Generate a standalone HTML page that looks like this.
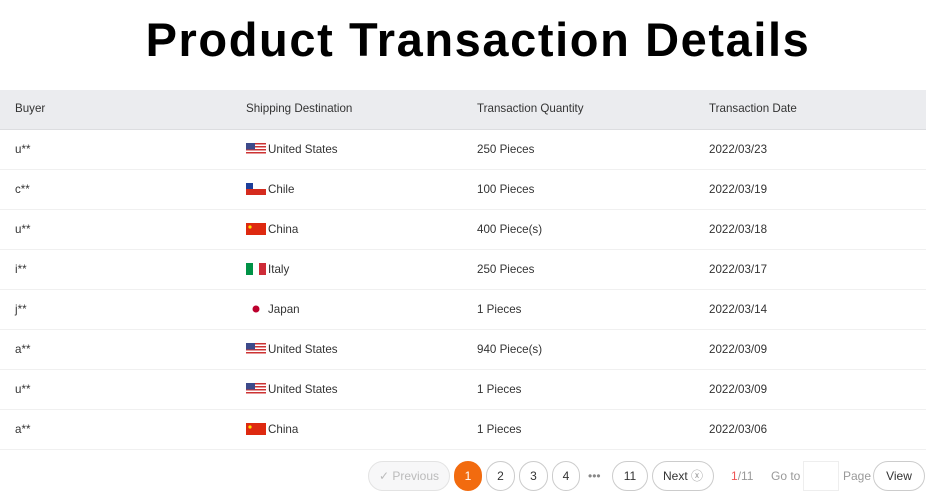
<!DOCTYPE html>
<html><head><style>
*{margin:0;padding:0;box-sizing:border-box}
body{width:926px;height:491px;background:#fff;font-family:"Liberation Sans",sans-serif;color:#333;position:relative;overflow:hidden}
h1{position:absolute;top:12px;left:0;width:956px;text-align:center;font-size:47px;font-weight:bold;color:#000;letter-spacing:1.6px}
.hd{position:absolute;top:90px;left:0;width:926px;height:40px;background:#ebecef;border-bottom:1px solid #dcdde0}
.row{position:absolute;left:0;width:926px;height:40px;border-bottom:1px solid #f0f0f0}
.c{position:absolute;font-size:11.6px;line-height:40px;top:0;color:#333}
.hd .c{line-height:38px}
.f{display:inline-block;width:20px;height:12px;vertical-align:-2px;margin-right:2px}
.btn{position:absolute;top:461px;height:30px;border:1px solid #ccc;border-radius:15px;font-size:12px;line-height:28px;text-align:center;color:#333;background:#fff}
.t{position:absolute;top:461px;line-height:30px;font-size:12px;color:#999}
</style></head><body>
<h1>Product Transaction Details</h1>
<div class="hd"><span class="c" style="left:15px">Buyer</span><span class="c" style="left:246px">Shipping Destination</span><span class="c" style="left:477px">Transaction Quantity</span><span class="c" style="left:709px">Transaction Date</span></div>
<svg width="0" height="0" style="position:absolute"><defs>
<g id="us"><rect width="20" height="12" fill="#fff"/><g fill="#c33"><rect y="0" width="20" height="1.5"/><rect y="3" width="20" height="1.5"/><rect y="6" width="20" height="1.5"/><rect y="9" width="20" height="1.5"/></g><rect width="9" height="6.5" fill="#3c4a8a"/></g>
<g id="cl"><rect width="20" height="6" fill="#fff"/><rect y="6" width="20" height="6" fill="#d52b1e"/><rect width="7" height="6" fill="#1d3f9a"/></g>
<g id="cn"><rect width="20" height="12" fill="#de2910"/><circle cx="4" cy="4" r="1.6" fill="#ffde00"/></g>
<g id="it"><rect width="7" height="12" fill="#009246"/><rect x="7" width="6" height="12" fill="#fff"/><rect x="13" width="7" height="12" fill="#ce2b37"/></g>
<g id="jp"><rect width="20" height="12" fill="#fff"/><circle cx="10" cy="6" r="3.5" fill="#bc002d"/></g>
</defs></svg>
<div class="row" style="top:130px"><span class="c" style="left:15px">u**</span><span class="c" style="left:246px"><svg class="f"><use href="#us"/></svg>United States</span><span class="c" style="left:477px">250 Pieces</span><span class="c" style="left:709px">2022/03/23</span></div>
<div class="row" style="top:170px"><span class="c" style="left:15px">c**</span><span class="c" style="left:246px"><svg class="f"><use href="#cl"/></svg>Chile</span><span class="c" style="left:477px">100 Pieces</span><span class="c" style="left:709px">2022/03/19</span></div>
<div class="row" style="top:210px"><span class="c" style="left:15px">u**</span><span class="c" style="left:246px"><svg class="f"><use href="#cn"/></svg>China</span><span class="c" style="left:477px">400 Piece(s)</span><span class="c" style="left:709px">2022/03/18</span></div>
<div class="row" style="top:250px"><span class="c" style="left:15px">i**</span><span class="c" style="left:246px"><svg class="f"><use href="#it"/></svg>Italy</span><span class="c" style="left:477px">250 Pieces</span><span class="c" style="left:709px">2022/03/17</span></div>
<div class="row" style="top:290px"><span class="c" style="left:15px">j**</span><span class="c" style="left:246px"><svg class="f"><use href="#jp"/></svg>Japan</span><span class="c" style="left:477px">1 Pieces</span><span class="c" style="left:709px">2022/03/14</span></div>
<div class="row" style="top:330px"><span class="c" style="left:15px">a**</span><span class="c" style="left:246px"><svg class="f"><use href="#us"/></svg>United States</span><span class="c" style="left:477px">940 Piece(s)</span><span class="c" style="left:709px">2022/03/09</span></div>
<div class="row" style="top:370px"><span class="c" style="left:15px">u**</span><span class="c" style="left:246px"><svg class="f"><use href="#us"/></svg>United States</span><span class="c" style="left:477px">1 Pieces</span><span class="c" style="left:709px">2022/03/09</span></div>
<div class="row" style="top:410px"><span class="c" style="left:15px">a**</span><span class="c" style="left:246px"><svg class="f"><use href="#cn"/></svg>China</span><span class="c" style="left:477px">1 Pieces</span><span class="c" style="left:709px">2022/03/06</span></div>
<div class="btn" style="left:368px;width:82px;color:#bbb;border-color:#e3e3e3;background:#f7f7f8">✓ Previous</div>
<div class="btn" style="left:454px;width:28px;background:#f26b0f;border-color:#f26b0f;color:#fff">1</div>
<div class="btn" style="left:486px;width:29px">2</div>
<div class="btn" style="left:519px;width:29px">3</div>
<div class="btn" style="left:552px;width:28px">4</div>
<div class="t" style="left:588px;color:#888">•••</div>
<div class="btn" style="left:612px;width:36px">11</div>
<div class="btn" style="left:652px;width:62px">Next <span style="color:#999">ⓧ</span></div>
<div class="t" style="left:731px"><span style="color:#e55">1</span>/11</div>
<div class="t" style="left:771px">Go to</div>
<div style="position:absolute;left:803px;top:461px;width:36px;height:30px;border:1px solid #eee"></div>
<div class="t" style="left:843px">Page</div>
<div class="btn" style="left:873px;width:52px">View</div>
</body></html>
